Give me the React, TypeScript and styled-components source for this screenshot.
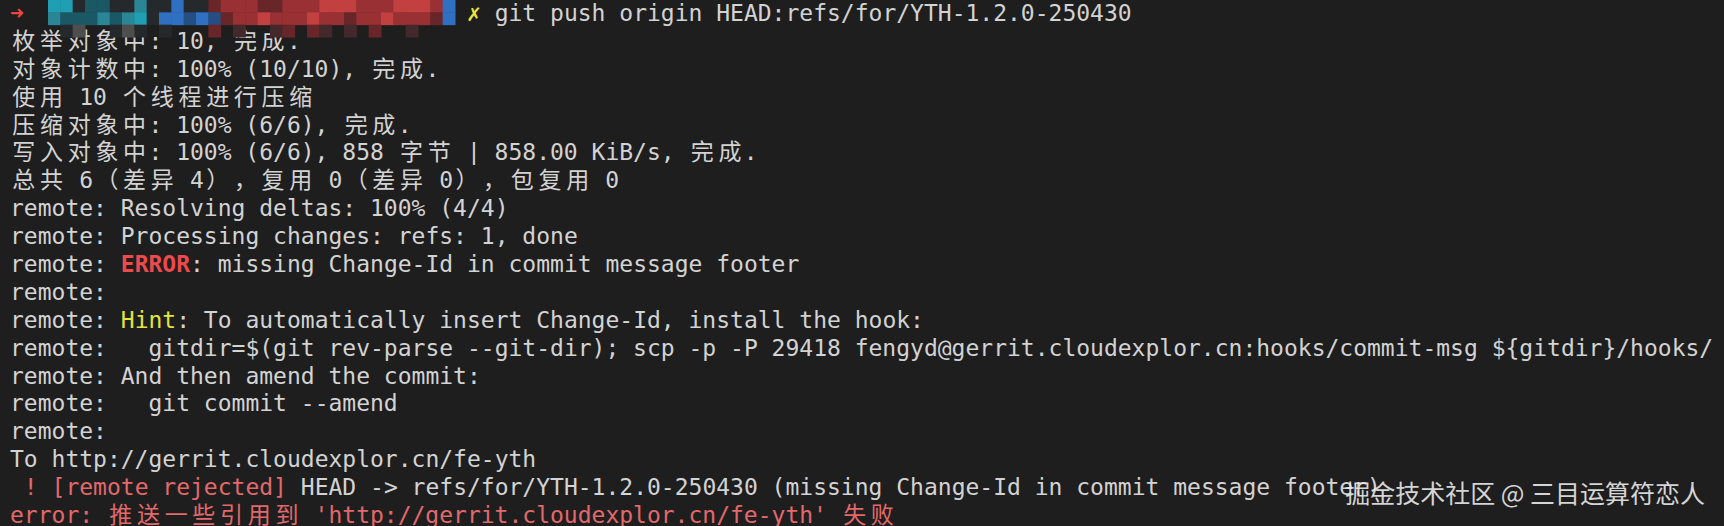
import React from "react";
import styled, { createGlobalStyle } from "styled-components";

const GlobalStyle = createGlobalStyle`
  html, body {
    margin: 0;
    padding: 0;
    background: #1e1e1e;
  }
  body {
    width: 1724px;
    height: 526px;
    overflow: hidden;
  }
`;

type Tone = "plain" | "red" | "errorTag" | "hint" | "arrow" | "cross";

const toneColor: Record<Tone, string> = {
  plain: "inherit",
  red: "#e2696b",
  errorTag: "#ec4a4d",
  hint: "#e4e43c",
  arrow: "#e8473f",
  cross: "#eee33a",
};

const Terminal = styled.div`
  position: relative;
  box-sizing: border-box;
  width: 1724px;
  height: 526px;
  overflow: hidden;
  padding: 0 0 0 10px;
  background: #1e1e1e;
  color: #d3d3d3;
  font-family: "DejaVu Sans Mono", "Noto Sans CJK SC", monospace;
  font-size: 23px;
  line-height: 27.9px;
`;

const Line = styled.div`
  white-space: pre;
  height: 27.9px;
`;

const Seg = styled.span<{ $tone: Tone }>`
  color: ${(p) => toneColor[p.$tone]};
  font-weight: ${(p) => (p.$tone === "errorTag" || p.$tone === "arrow" || p.$tone === "cross" ? 700 : 400)};
`;

const Wide = styled.span`
  display: inline-block;
  width: 2ch;
  text-align: center;
`;

const Censor = styled.span`
  position: relative;
  display: inline-block;
  vertical-align: top;
  width: 31ch;
  height: 1em;
`;

const Mosaic = styled.svg`
  position: absolute;
  left: 10px;
  top: 0;
  width: 407px;
  height: 37px;
  overflow: visible;
`;

const Watermark = styled.div`
  position: absolute;
  right: 19px;
  bottom: 21px;
  font-family: "Noto Sans CJK SC", sans-serif;
  font-size: 25px;
  line-height: 1;
  color: rgba(232, 232, 232, 0.92);
  white-space: pre;
`;

const WIDE_RE = /[\u2e80-\u9fff\uf900-\ufaff\uff00-\uff60\uffe0-\uffe6\u3000-\u303f]/;

function Txt({ s }: { s: string }) {
  const parts: React.ReactNode[] = [];
  let buf = "";
  Array.from(s).forEach((ch, i) => {
    if (WIDE_RE.test(ch)) {
      if (buf) {
        parts.push(buf);
        buf = "";
      }
      parts.push(<Wide key={i}>{ch}</Wide>);
    } else {
      buf += ch;
    }
  });
  if (buf) parts.push(buf);
  return <>{parts}</>;
}

const palette: Record<string, string> = {
  k: "#25292b",
  T: "#1f9eb4",
  t: "#1b5866",
  m: "#2a8594",
  B: "#2f70c2",
  b: "#244e84",
  R: "#c2403f",
  r: "#983034",
  d: "#682628",
  g: "#4e4e4e",
  p: "#43292b",
};

const mosaicRows = [
  "TTkttkkmkkBkkdrrrddrrrRRRrrrRRRrB",
  "mtttmtmTkBBbBbdrrRrrrRrrdrrRrrrdB",
  ".kg..kgk.k...d.p..pd.dp.p.d..p...",
];

function MosaicArt() {
  const w = 407 / 33;
  const h = 37 / 3;
  return (
    <Mosaic viewBox="0 0 407 37" aria-hidden="true">
      {mosaicRows.map((row, ri) =>
        Array.from(row).map((c, ci) =>
          c === "." ? null : (
            <rect
              key={`${ri}-${ci}`}
              x={ci * w}
              y={ri * h}
              width={w + 0.5}
              height={h + 0.5}
              fill={palette[c]}
            />
          )
        )
      )}
    </Mosaic>
  );
}

type S = [string, Tone?];

const lines: S[][] = [
  [["枚举对象中: 10, 完成."]],
  [["对象计数中: 100% (10/10), 完成."]],
  [["使用 10 个线程进行压缩"]],
  [["压缩对象中: 100% (6/6), 完成."]],
  [["写入对象中: 100% (6/6), 858 字节 | 858.00 KiB/s, 完成."]],
  [["总共 6（差异 4），复用 0（差异 0），包复用 0"]],
  [["remote: Resolving deltas: 100% (4/4)"]],
  [["remote: Processing changes: refs: 1, done"]],
  [["remote: "], ["ERROR", "errorTag"], [": missing Change-Id in commit message footer"]],
  [["remote:"]],
  [["remote: "], ["Hint", "hint"], [": To automatically insert Change-Id, install the hook:"]],
  [["remote:   gitdir=$(git rev-parse --git-dir); scp -p -P 29418 fengyd@gerrit.cloudexplor.cn:hooks/commit-msg ${gitdir}/hooks/"]],
  [["remote: And then amend the commit:"]],
  [["remote:   git commit --amend"]],
  [["remote:"]],
  [["To http://gerrit.cloudexplor.cn/fe-yth"]],
  [[" "], ["! [remote rejected]", "red"], [" HEAD -> refs/for/YTH-1.2.0-250430 (missing Change-Id in commit message footer)"]],
  [["error: 推送一些引用到 'http://gerrit.cloudexplor.cn/fe-yth' 失败", "red"]],
];

export default function App() {
  return (
    <>
      <GlobalStyle />
      <Terminal>
        <Line>
          <Seg $tone="arrow">➜</Seg>
          {" "}
          <Censor>
            <MosaicArt />
          </Censor>
          <Seg $tone="cross">✗</Seg>
          {" git push origin HEAD:refs/for/YTH-1.2.0-250430"}
        </Line>
        {lines.map((segs, i) => (
          <Line key={i}>
            {segs.map(([text, tone], j) => (
              <Seg key={j} $tone={tone ?? "plain"}>
                <Txt s={text} />
              </Seg>
            ))}
          </Line>
        ))}
        <Watermark>掘金技术社区 @ 三目运算符恋人</Watermark>
      </Terminal>
    </>
  );
}
